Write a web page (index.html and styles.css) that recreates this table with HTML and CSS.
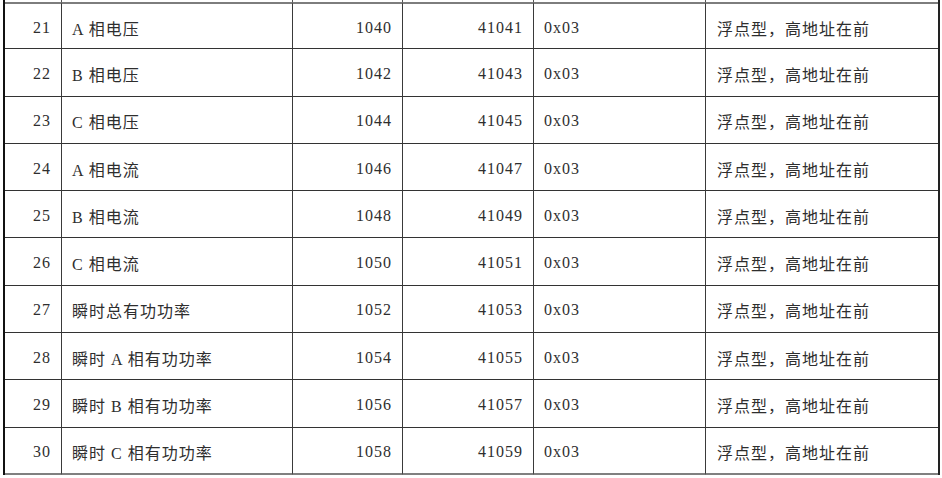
FILE: index.html
```html
<!DOCTYPE html>
<html lang="zh-CN">
<head>
<meta charset="utf-8">
<title>寄存器表</title>
<link rel="stylesheet" href="styles.css">
</head>
<body>
<div class="sheet">
  <div class="stub"></div><div class="stub"></div><div class="stub"></div><div class="stub"></div><div class="stub"></div><div class="stub last"></div>

  <div class="cell num top">21</div><div class="cell top">A 相电压</div><div class="cell num top">1040</div><div class="cell num top">41041</div><div class="cell top">0x03</div><div class="cell last top">浮点型，高地址在前</div>
  <div class="cell num">22</div><div class="cell">B 相电压</div><div class="cell num">1042</div><div class="cell num">41043</div><div class="cell">0x03</div><div class="cell last">浮点型，高地址在前</div>
  <div class="cell num">23</div><div class="cell">C 相电压</div><div class="cell num">1044</div><div class="cell num">41045</div><div class="cell">0x03</div><div class="cell last">浮点型，高地址在前</div>
  <div class="cell num">24</div><div class="cell">A 相电流</div><div class="cell num">1046</div><div class="cell num">41047</div><div class="cell">0x03</div><div class="cell last">浮点型，高地址在前</div>
  <div class="cell num">25</div><div class="cell">B 相电流</div><div class="cell num">1048</div><div class="cell num">41049</div><div class="cell">0x03</div><div class="cell last">浮点型，高地址在前</div>
  <div class="cell num">26</div><div class="cell">C 相电流</div><div class="cell num">1050</div><div class="cell num">41051</div><div class="cell">0x03</div><div class="cell last">浮点型，高地址在前</div>
  <div class="cell num">27</div><div class="cell">瞬时总有功功率</div><div class="cell num">1052</div><div class="cell num">41053</div><div class="cell">0x03</div><div class="cell last">浮点型，高地址在前</div>
  <div class="cell num">28</div><div class="cell">瞬时 A 相有功功率</div><div class="cell num">1054</div><div class="cell num">41055</div><div class="cell">0x03</div><div class="cell last">浮点型，高地址在前</div>
  <div class="cell num">29</div><div class="cell">瞬时 B 相有功功率</div><div class="cell num">1056</div><div class="cell num">41057</div><div class="cell">0x03</div><div class="cell last">浮点型，高地址在前</div>
  <div class="cell num bottom">30</div><div class="cell bottom">瞬时 C 相有功功率</div><div class="cell num bottom">1058</div><div class="cell num bottom">41059</div><div class="cell bottom">0x03</div><div class="cell last bottom">浮点型，高地址在前</div>
</div>
</body>
</html>
```
FILE: styles.css
```css
html, body {
  margin: 0;
  padding: 0;
  background: #ffffff;
}

.sheet {
  margin-left: 3px;
  width: 933px;
  border-left: 2px solid #111111;
  border-right: 2px solid #222222;
  display: grid;
  grid-template-columns: 57px 231px 110px 131px 172px 232px;
  grid-template-rows: 2px repeat(10, 47.3px);
  font-family: "Liberation Serif", "Noto Sans CJK SC", serif;
  font-size: 16px;
  letter-spacing: 1px;
  color: #2e2e2e;
}

.stub {
  border-right: 1px solid #555555;
}

.cell {
  display: flex;
  align-items: center;
  padding: 3px 10px 0 10px;
  border-right: 1px solid #3a3a3a;
  border-bottom: 1px solid #333333;
  white-space: nowrap;
  box-sizing: border-box;
}

.cell.num {
  justify-content: flex-end;
  padding-right: 10px;
}

.cell.last,
.stub.last {
  border-right: none;
  padding-left: 11px;
}

.cell.top {
  border-top: 2px solid #7d7d7d;
}

.cell.bottom {
  border-bottom: 2px solid #808080;
}
```
